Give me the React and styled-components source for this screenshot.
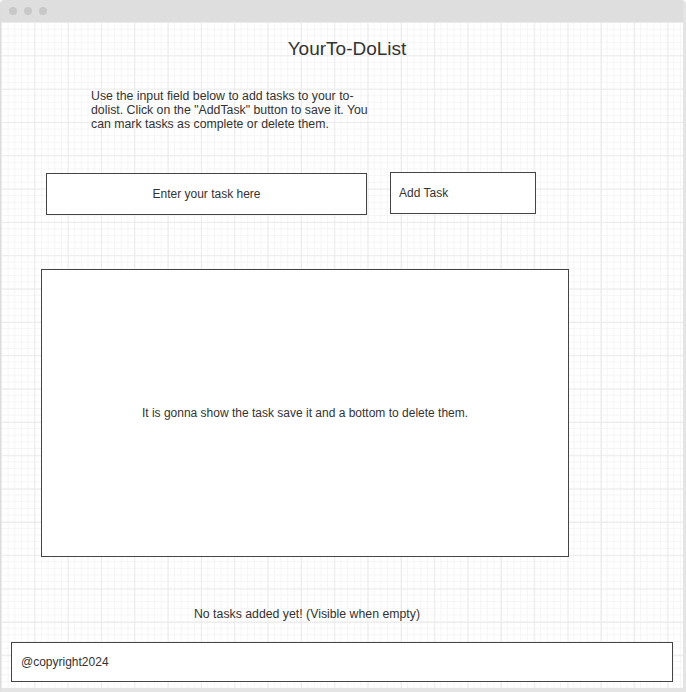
import React from "react";
import styled, { createGlobalStyle } from "styled-components";

const Global = createGlobalStyle`
  html, body { margin: 0; padding: 0; background: #ffffff; }
  body { font-family: "Liberation Sans", Arial, sans-serif; }
  * { box-sizing: border-box; }
`;

const Window = styled.div`
  width: 686px;
  height: 692px;
  display: flex;
  flex-direction: column;
  border-left: 1px solid #dcdcdc;
  border-right: 3px solid #e4e4e4;
  border-bottom: 4px solid #e4e4e4;
  border-radius: 4px 4px 0 0;
  overflow: hidden;
  background: #ffffff;
`;

const TitleBar = styled.div`
  height: 22px;
  flex: none;
  background: #dedede;
  display: flex;
  align-items: center;
  gap: 7px;
  padding-left: 8px;
`;

const Dot = styled.span`
  width: 8px;
  height: 8px;
  border-radius: 50%;
  background: #c8c8c8;
`;

const Canvas = styled.div`
  flex: 1;
  display: flex;
  flex-direction: column;
  align-items: flex-start;
  background-color: #ffffff;
  background-image:
    linear-gradient(#ebebeb 1px, transparent 1px),
    linear-gradient(90deg, #ebebeb 1px, transparent 1px),
    linear-gradient(#f5f5f5 1px, transparent 1px),
    linear-gradient(90deg, #f5f5f5 1px, transparent 1px);
  background-size: 33.333px 33.333px, 33.333px 33.333px, 6.667px 6.667px, 6.667px 6.667px;
  background-position: 0 0;
  color: #333333;
`;

const Heading = styled.h1`
  align-self: stretch;
  margin: 16px 0 0;
  padding-left: 10px;
  font-size: 19px;
  line-height: 22px;
  font-weight: normal;
  text-align: center;
  color: #333333;
`;

const Intro = styled.p`
  margin: 29px 0 0 90px;
  width: 290px;
  font-size: 12.3px;
  line-height: 14px;
  color: #333333;
`;

const InputRow = styled.div`
  display: flex;
  align-items: flex-start;
  gap: 23px;
  margin: 41px 0 0 45px;
`;

const TaskInput = styled.div`
  margin-top: 1px;
  width: 321px;
  height: 42px;
  border: 1px solid #444444;
  background: #ffffff;
  display: flex;
  align-items: center;
  justify-content: center;
  font-size: 12px;
  color: #333333;
`;

const AddButton = styled.div`
  width: 146px;
  height: 42px;
  border: 1px solid #444444;
  background: #ffffff;
  display: flex;
  align-items: center;
  padding-left: 8px;
  font-size: 12px;
  color: #333333;
`;

const TaskPanel = styled.div`
  margin: 54px 0 0 40px;
  width: 528px;
  height: 288px;
  border: 1px solid #444444;
  background: #ffffff;
  display: flex;
  align-items: center;
  justify-content: center;
  font-size: 12px;
  color: #333333;
`;

const EmptyNote = styled.div`
  margin: 50px 0 0 42px;
  width: 528px;
  text-align: center;
  font-size: 12.3px;
  line-height: 14px;
  color: #333333;
`;

const Footer = styled.div`
  margin: 21px 0 0 10px;
  width: 662px;
  height: 40px;
  border: 1px solid #444444;
  background: #ffffff;
  display: flex;
  align-items: center;
  padding-left: 9px;
  font-size: 12px;
  color: #333333;
`;

export default function App() {
  return (
    <>
      <Global />
      <Window>
        <TitleBar>
          <Dot />
          <Dot />
          <Dot />
        </TitleBar>
        <Canvas>
          <Heading>YourTo-DoList</Heading>
          <Intro>
            Use the input field below to add tasks to your to-dolist. Click on the "AddTask" button to save it. You can mark tasks as complete or delete them.
          </Intro>
          <InputRow>
            <TaskInput>Enter your task here</TaskInput>
            <AddButton>Add Task</AddButton>
          </InputRow>
          <TaskPanel>It is gonna show the task save it and a bottom to delete them.</TaskPanel>
          <EmptyNote>No tasks added yet! (Visible when empty)</EmptyNote>
          <Footer>@copyright2024</Footer>
        </Canvas>
      </Window>
    </>
  );
}
